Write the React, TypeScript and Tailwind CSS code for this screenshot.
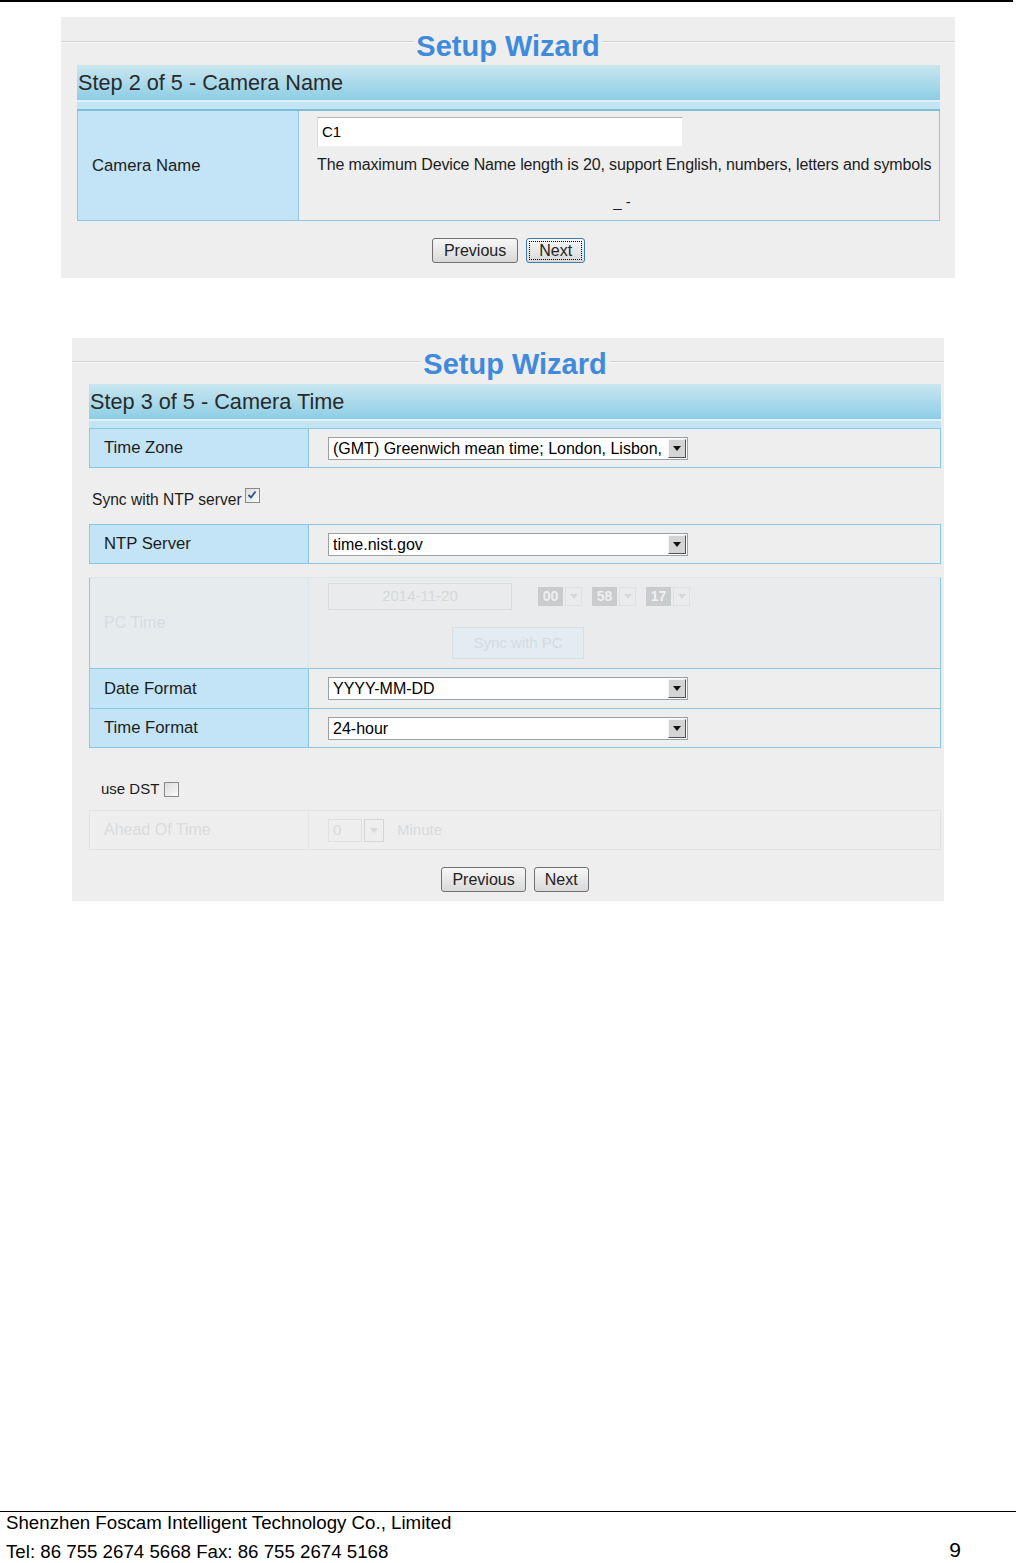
import React from "react";

function Arrow({ faded = false }: { faded?: boolean }) {
  return (
    <svg width="8" height="5" viewBox="0 0 8 5">
      <path d="M0 0 L8 0 L4 5 Z" fill={faded ? "#d6d9db" : "#111"} />
    </svg>
  );
}

function Select({ value, className }: { value: string; className: string }) {
  return (
    <div className={"flex h-[23px] border border-[#9aa1a6] bg-white " + className}>
      <div className="flex-1 overflow-hidden whitespace-nowrap pl-[4px] text-[16px] leading-[21px] text-black">
        {value}
      </div>
      <div className="m-[1px] flex w-[18px] items-center justify-center border border-b-[#505050] border-l-[#f4f4f4] border-r-[#505050] border-t-[#f4f4f4] bg-[#d4d4d4]">
        <Arrow />
      </div>
    </div>
  );
}

function Btn({ label, focused = false, small = false }: { label: string; focused?: boolean; small?: boolean }) {
  return (
    <div
      className={
        "flex h-[25px] items-center justify-center rounded-[3px] border bg-linear-to-b from-[#f7f7f7] to-[#d9d9d9] text-[16px] text-[#222] " +
        (focused ? "border-[#3d7bad] px-[2px]" : small ? "border-[#707070] px-[10px]" : "border-[#707070] px-[11px]")
      }
    >
      {focused ? (
        <span className="border border-dotted border-black px-[9px] leading-[17px]">{label}</span>
      ) : (
        <span className="leading-[20px]">{label}</span>
      )}
    </div>
  );
}

function Title({ shift = false, h, lineMt, textMt }: { shift?: boolean; h: string; lineMt: string; textMt: string }) {
  return (
    <div className={"flex items-start " + h}>
      <div
        className={
          "h-[2px] grow border-t border-t-[#d2d2d2] border-b border-b-[#fafafa] " +
          lineMt +
          (shift ? " basis-[14px]" : " basis-0")
        }
      />
      <div className={"px-[3px] text-[29px] font-bold leading-[34px] text-[#3f8adb] " + textMt}>Setup Wizard</div>
      <div className={"h-[2px] grow basis-0 border-t border-t-[#d2d2d2] border-b border-b-[#fafafa] " + lineMt} />
    </div>
  );
}

function StepBar({ text }: { text: string }) {
  return (
    <div>
      <div className="flex h-[35px] items-center bg-linear-to-b from-[#c9e6f0] to-[#8ccee6] pl-[1px] pt-[1px] text-[21.7px] text-[#2a2a2a]">
        {text}
      </div>
      <div className="h-[2px] bg-[#e2f1f7]" />
      <div className="h-[7px] bg-[#c3e5f3]" />
    </div>
  );
}

function Row({
  label,
  children,
  h,
  last = false,
}: {
  label: string;
  children: React.ReactNode;
  h: string;
  last?: boolean;
}) {
  return (
    <div className={"flex " + h + (last ? "" : " border-b border-b-[#8bc7de]")}>
      <div className="flex w-[219px] items-center border-r border-r-[#8bc7de] bg-[#c2e4f6] pl-[14px] text-[16.7px] text-[#1c1c1c]">
        {label}
      </div>
      <div className="flex flex-1 items-center pl-[19px]">{children}</div>
    </div>
  );
}

function Check({ checked }: { checked: boolean }) {
  return (
    <div className="flex h-[15px] w-[15px] items-center justify-center border border-[#8a8a8a] bg-linear-to-br from-[#dcdcdc] to-[#fbfbfb]">
      {checked && (
        <svg width="10" height="10" viewBox="0 0 10 10">
          <path d="M1.5 5 L4 7.5 L8.5 1.5" stroke="#2b4f8a" strokeWidth="1.8" fill="none" />
        </svg>
      )}
    </div>
  );
}

function FadedSel({ v, w }: { v: string; w: string }) {
  return (
    <div className="flex h-[19px] items-stretch">
      <div className={"flex items-center justify-center bg-[#c9cbcd] text-[14px] font-bold text-[#eef0f1] " + w}>{v}</div>
      <div className="ml-[2px] flex w-[17px] items-center justify-center border border-[#dfe2e4]">
        <Arrow faded />
      </div>
    </div>
  );
}

export default function App() {
  return (
    <div className="flex h-[1563px] w-[1016px] flex-col overflow-hidden bg-white font-['Liberation_Sans',Arial,sans-serif]">
      <div className="mr-[3px] h-[2px] bg-black" />

      {/* Panel 1 */}
      <div className="mx-[61px] mt-[15px] bg-[#eeeeee] pb-[15px]">
        <Title h="h-[48px]" lineMt="mt-[24px]" textMt="mt-[12px]" />
        <div className="pl-[16px] pr-[15px]">
          <StepBar text="Step 2 of 5 - Camera Name" />
          <div className="flex h-[112px] border border-t-2 border-[#8bc7de] border-t-[#7dbdd5]">
            <div className="flex w-[221px] items-center border-r border-r-[#8bc7de] bg-[#c2e4f6] pl-[14px] text-[16.7px] text-[#1c1c1c]">
              Camera Name
            </div>
            <div className="flex flex-1 flex-col pl-[18px] pr-[4px] pt-[6px]">
              <div className="flex h-[30px] w-[366px] items-center border border-b-[#f0f0f0] border-l-[#dcdcdc] border-r-[#f0f0f0] border-t-[#b5b5b5] bg-white pl-[4px] text-[15px] text-black">
                C1
              </div>
              <div className="mt-[9px] whitespace-nowrap text-[16px] leading-[18px] tracking-[-0.13px] text-[#1c1c1c]">
                The maximum Device Name length is 20, support English, numbers, letters and symbols
              </div>
              <div className="mt-[19px] pr-[8px] text-center text-[15px] leading-[18px] text-[#1c1c1c]">_ -</div>
            </div>
          </div>
          <div className="mt-[17px] flex justify-center gap-[8px]">
            <Btn label="Previous" />
            <Btn label="Next" focused />
          </div>
        </div>
      </div>

      {/* Panel 2 */}
      <div className="mx-[72px] mt-[60px] bg-[#eeeeee] pb-[9px]">
        <Title shift h="h-[46px]" lineMt="mt-[23px]" textMt="mt-[9px]" />
        <div className="pl-[17px] pr-[3px]">
          <StepBar text="Step 3 of 5 - Camera Time" />
          <div className="border border-[#8bc7de]">
            <Row label="Time Zone" h="h-[38px]" last>
              <Select value="(GMT) Greenwich mean time; London, Lisbon," className="w-[360px]" />
            </Row>
          </div>
          <div className="flex h-[56px] items-center pl-[3px] pt-[8px] text-[15.6px] text-[#1c1c1c]">
            <span>Sync with NTP server</span>
            <div className="mb-[10px] ml-[3px]">
              <Check checked />
            </div>
          </div>
          <div className="border border-[#8bc7de]">
            <Row label="NTP Server" h="h-[38px]" last>
              <Select value="time.nist.gov" className="w-[360px]" />
            </Row>
          </div>
          <div className="mt-[13px] border border-[#8bc7de] border-t-[#dde5e9]">
            <div className="flex h-[91px] border-b border-b-[#8bc7de]">
              <div className="flex w-[219px] items-center border-r border-r-[#dfe6e9] bg-[#e6ebee] pl-[14px] text-[16px] text-[#d6dde1]">
                PC Time
              </div>
              <div className="flex-1 bg-[#e9ebec] pl-[19px] pt-[5px]">
                <div className="flex items-center">
                  <div className="flex h-[27px] w-[184px] items-center justify-center border border-[#dadddf] text-[15px] text-[#d6d9db]">
                    2014-11-20
                  </div>
                  <div className="ml-[26px] flex gap-[10px]">
                    <FadedSel v="00" w="w-[25px]" />
                    <FadedSel v="58" w="w-[25px]" />
                    <FadedSel v="17" w="w-[25px]" />
                  </div>
                </div>
                <div className="ml-[124px] mt-[17px] flex h-[32px] w-[132px] items-center justify-center border border-[#d9e0e3] bg-[#e3ecf0] text-[15px] text-[#d2dce1]">
                  Sync with PC
                </div>
              </div>
            </div>
            <Row label="Date Format" h="h-[40px]">
              <Select value="YYYY-MM-DD" className="w-[360px]" />
            </Row>
            <Row label="Time Format" h="h-[38px]" last>
              <Select value="24-hour" className="w-[360px]" />
            </Row>
          </div>
          <div className="flex h-[62px] items-center pl-[12px] pt-[20px] text-[15px] text-[#1c1c1c]">
            <span>use DST</span>
            <div className="ml-[5px]">
              <Check checked={false} />
            </div>
          </div>
          <div className="flex h-[40px] border border-[#e1e4e6]">
            <div className="flex w-[219px] items-center border-r border-r-[#e3e5e7] pl-[14px] text-[16px] text-[#dadcdd]">
              Ahead Of Time
            </div>
            <div className="flex flex-1 items-center pl-[19px]">
              <div className="flex h-[23px] items-stretch">
                <div className="flex w-[34px] items-center border border-[#dfe2e4] pl-[4px] text-[15px] text-[#d8dadc]">0</div>
                <div className="ml-[2px] flex w-[20px] items-center justify-center border border-[#d4d7d9]">
                  <Arrow faded />
                </div>
              </div>
              <span className="ml-[13px] text-[15px] text-[#d8dadc]">Minute</span>
            </div>
          </div>
          <div className="mt-[17px] flex justify-center gap-[8px]">
            <Btn label="Previous" small />
            <Btn label="Next" small />
          </div>
        </div>
      </div>

      {/* Footer */}
      <div className="mt-auto h-[52px] shrink-0 border-t border-t-black text-[18.7px] text-black">
        <div className="pl-[6px] leading-[22px]">Shenzhen Foscam Intelligent Technology Co., Limited</div>
        <div className="mt-[9px] flex items-start justify-between pl-[6px] pr-[55px]">
          <span className="leading-[18px]">Tel: 86 755 2674 5668 Fax: 86 755 2674 5168</span>
          <span className="-mt-[4px] text-[21px] leading-[22px]">9</span>
        </div>
      </div>
    </div>
  );
}
